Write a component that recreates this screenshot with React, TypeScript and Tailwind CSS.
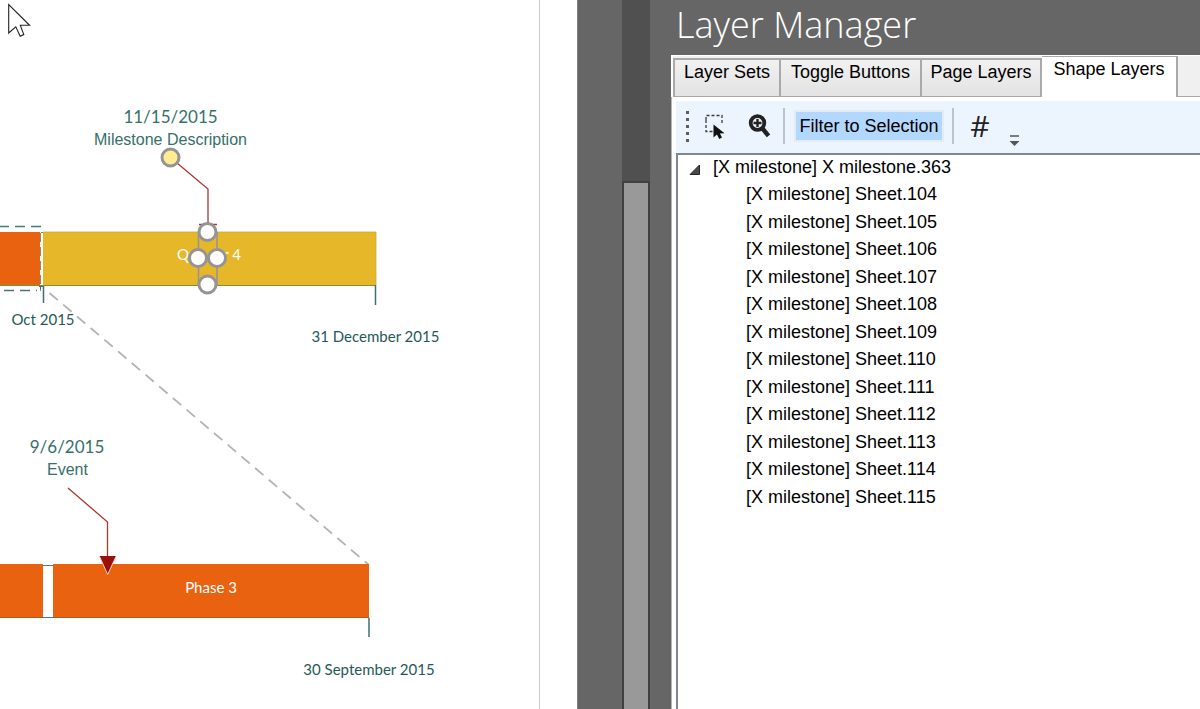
import React from "react";

export default function App() {
  const tabs = [
    { name: "Layer Sets", active: false, width: "w-[108px]" },
    { name: "Toggle Buttons", active: false, width: "w-[141px]" },
    { name: "Page Layers", active: false, width: "w-[120px]" },
    { name: "Shape Layers", active: true, width: "w-[136px]" },
  ];
  const sheets = [104, 105, 106, 107, 108, 109, 110, 111, 112, 113, 114, 115];
  const handles = [
    { x: 207.5, y: 232 },
    { x: 198, y: 258 },
    { x: 217, y: 258 },
    { x: 207.5, y: 284.5 },
  ];

  return (
    <div className="flex h-screen w-full overflow-hidden bg-[#666666] font-['Liberation_Sans',sans-serif] text-black">
      {/* Drawing canvas */}
      <main className="w-[578px] shrink-0 border-r border-[#808080] bg-white">
        <svg className="block h-full w-full" role="img" aria-label="Timeline">
          <path d="M539.5 0V2000" stroke="#cccccc" />

          {/* Upper timeline */}
          <rect x="0" y="232" width="40" height="53" fill="#e96210" />
          <rect x="43" y="232" width="333" height="53" fill="#e6b729" />
          <path d="M0 285.5H376M41 232.5H43" stroke="#8d8a3c" fill="none" />
          <path d="M43 232H376V285" stroke="#c9a93c" strokeWidth="0.8" fill="none" />
          <path
            d="M41 226.5H-20M4 290.5H37"
            stroke="#3f7c79"
            strokeWidth="1.5"
            strokeDasharray="10 6"
            fill="none"
          />
          <path
            d="M40.5 233V291"
            stroke="#8a8a72"
            strokeDasharray="9 5"
            fill="none"
          />
          <path d="M43.5 286V303M375.5 285V305" stroke="#3d716e" strokeWidth="1.5" />
          <path d="M39 286.5H44M40.5 286V289" stroke="#3d716e" fill="none" />
          <path
            d="M49.5 293L369 565"
            stroke="#b3b3b3"
            strokeWidth="1.8"
            strokeDasharray="11 7"
          />

          {/* Lower timeline */}
          <rect x="0" y="564" width="43" height="54" fill="#e96210" />
          <rect x="53" y="564" width="316" height="54" fill="#e96210" />
          <path d="M0 617.5H369" stroke="#b5581f" />
          <path d="M43 565.5H53M43 617.5H53" stroke="#4c7f7c" />
          <path d="M369 618V637" stroke="#6d9693" strokeWidth="2" />

          {/* Callouts */}
          <path d="M170.5 157.5L208 189V224" stroke="#a9382f" strokeWidth="1.3" fill="none" />
          <path d="M199 224.5H217" stroke="#a9382f" strokeWidth="1.5" />
          <path d="M68 488L107.5 522V556" stroke="#a9382f" strokeWidth="1.3" fill="none" />
          <path d="M99.5 556.5H116L107.7 574.5Z" fill="#9c100c" stroke="#f6d2b8" />
          <path d="M100 556.5H115.5" stroke="#9c100c" />

          <g
            textAnchor="middle"
            fill="#357069"
            className="font-['Liberation_Sans',sans-serif]"
            fontSize="16"
          >
            <text x="170.5" y="145">Milestone Description</text>
            <text x="67.5" y="475">Event</text>
          </g>
          <g
            textAnchor="middle"
            fill="#357069"
            className="font-['Lato',sans-serif]"
            fontSize="17"
          >
            <text x="170.5" y="123">11/15/2015</text>
            <text x="67" y="453">9/6/2015</text>
          </g>
          <g
            textAnchor="middle"
            fill="#1f5957"
            className="font-['Lato',sans-serif]"
            fontSize="15"
          >
            <text x="43" y="325">Oct 2015</text>
            <text x="375.5" y="342">31 December 2015</text>
            <text x="369" y="675">30 September 2015</text>
            <text x="209" y="260" fill="#ffffff">Quarter 4</text>
            <text x="211" y="593" fill="#ffffff">Phase 3</text>
          </g>

          {/* Selected shape */}
          <rect x="198" y="249" width="20" height="18" fill="#e6b729" />
          <path d="M198.5 232V285M217 232V285" stroke="#949494" strokeWidth="1.5" />
          {handles.map((handle) => (
            <circle
              key={`${handle.x}-${handle.y}`}
              cx={handle.x}
              cy={handle.y}
              r="8.5"
              fill="#ffffff"
              stroke="#949494"
              strokeWidth="3"
            />
          ))}
          <circle cx="170.5" cy="157.5" r="8.5" fill="#ffeb91" stroke="#949494" strokeWidth="3" />

          <path
            d="M8.7 4.5V33L15.8 26.8L20.2 36.3L23.8 34.6L20.3 25.3H29.6Z"
            fill="#ffffff"
            stroke="#222222"
            strokeWidth="1.1"
          />
        </svg>
      </main>

      {/* Canvas scrollbar */}
      <div className="ml-11 flex w-7 shrink-0 flex-col bg-[#505050] pt-[181px]">
        <div className="flex-1 border-2 border-b-0 border-[#404040] bg-[#999999]" />
      </div>

      {/* Layer Manager */}
      <aside className="ml-[21px] flex min-w-0 flex-1 flex-col">
        <h1 className="h-[55px] shrink-0 pl-[5px] font-['Open_Sans',sans-serif] text-[36px] leading-[50px] font-light text-white">
          Layer Manager
        </h1>

        <div role="tablist" className="flex h-[42px] shrink-0 items-end border-t border-l-2 border-white bg-[#f0f0f0]">
          {tabs.map((tab) => (
            <button
              key={tab.name}
              type="button"
              role="tab"
              aria-selected={tab.active}
              className={`flex shrink-0 items-start justify-center border-[#a9a9a9] text-[18px] leading-6 whitespace-nowrap ${tab.width} ${
                tab.active
                  ? "h-full border-t border-r-2 bg-white"
                  : "h-[39px] border-t-2 border-r-2 border-b bg-linear-to-b from-[#f1f1f1] to-[#e3e3e3] first:border-l-2"
              }`}
            >
              {tab.name}
            </button>
          ))}
          <div className="h-full flex-1 border-b border-[#a9a9a9]" />
        </div>

        <div className="flex min-h-0 flex-1 flex-col border-l border-[#b5b5b5] bg-white pt-1 pl-1">
          <div role="toolbar" className="flex h-[52px] shrink-0 items-center bg-[#ecf5fe] pb-0.5">
            <svg className="ml-2 h-9 w-6 shrink-0" viewBox="0 0 24 36">
              <path
                d="M3.5 3V34"
                stroke="#5c5c5c"
                strokeWidth="3"
                strokeDasharray="3 4"
              />
            </svg>
            <button type="button" aria-label="Select shapes" className="-ml-1.5 h-7 w-7">
              <svg width="28" height="28" viewBox="0 0 28 28">
                <path
                  d="M4 8V3.5H20V13M4 8V19.5H13"
                  fill="none"
                  stroke="#3a3a3a"
                  strokeWidth="1.3"
                  strokeDasharray="3 2"
                />
                <path
                  d="M11.5 12.5V25.5L14.9 22.6L17.3 27L20 25.6L17.9 21.5L22.5 21.2Z"
                  fill="#111111"
                />
              </svg>
            </button>
            <button type="button" aria-label="Zoom to shape" className="ml-4 h-7 w-7">
              <svg width="28" height="28" viewBox="0 0 28 28" fill="none" stroke="#222222">
                <circle cx="11.5" cy="11" r="6.8" strokeWidth="3.8" />
                <path d="M11.5 7V15M7.5 11H15.5" strokeWidth="2.4" />
                <path d="M16 16L22.5 23.8" strokeWidth="4.4" />
              </svg>
            </button>
            <div className="mx-[9px] h-9 w-0.5 shrink-0 bg-[#bcc3cc]" />
            <button
              type="button"
              aria-pressed="true"
              className="h-8 w-[150px] shrink-0 border-2 border-[#e4ebf1] bg-[#b2d8ff] text-[18px] leading-6 whitespace-nowrap"
            >
              Filter to Selection
            </button>
            <div className="mx-2 h-9 w-0.5 shrink-0 bg-[#bcc3cc]" />
            <button
              type="button"
              className="w-9 font-['Open_Sans',sans-serif] text-[30px] leading-9 text-[#222222]"
            >
              #
            </button>
            <button type="button" aria-label="Toolbar options" className="ml-1.5 self-end pb-0.5">
              <svg width="20" height="16" viewBox="0 0 20 16">
                <path d="M6 3H15" stroke="#555555" strokeWidth="1.5" />
                <path d="M5.5 8H15.5L10.5 13Z" fill="#555555" />
              </svg>
            </button>
          </div>

          <div className="min-h-0 flex-1 border-t-2 border-l-2 border-[#7f8795] text-[18px] leading-6">
            <ul className="grid h-[357px] auto-rows-fr items-start">
              <li className="flex items-center pl-[11px]">
                <button type="button" aria-label="Collapse" className="mr-3 pt-1.5">
                  <svg width="12" height="12" viewBox="0 0 12 12">
                    <path d="M10.5 1V10.5H1Z" fill="#4a4a4a" stroke="#262626" />
                  </svg>
                </button>
                [X milestone] X milestone.363
              </li>
              {sheets.map((sheet) => (
                <li key={sheet} className="pl-[68px]">
                  [X milestone] Sheet.{sheet}
                </li>
              ))}
            </ul>
          </div>
        </div>
      </aside>
    </div>
  );
}
